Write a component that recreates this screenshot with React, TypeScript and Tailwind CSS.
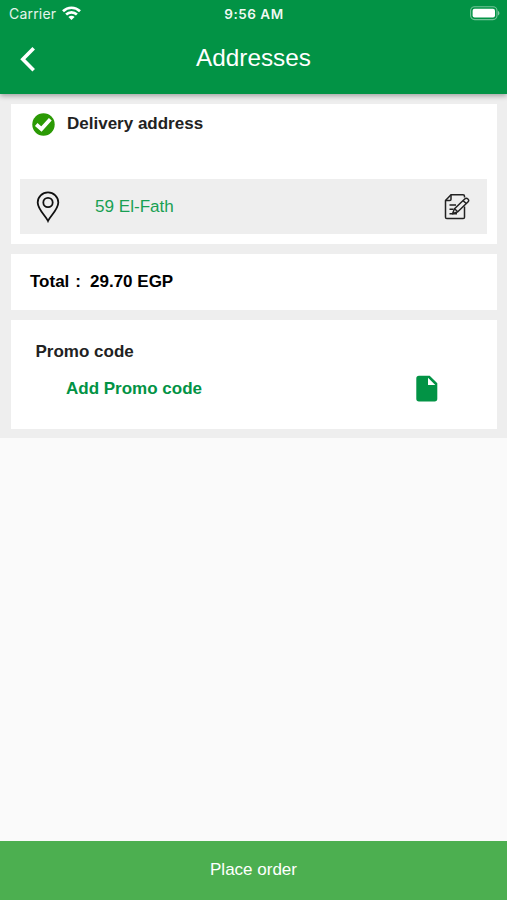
import React from 'react';

function StatusBar() {
  return (
    <div className="grid h-7 grid-cols-3 items-center pl-[9px] pr-[7px] font-['Inter',sans-serif] text-[14px] leading-7">
      <div className="flex items-center gap-[6px]">
        <span className="tracking-[0.2px] text-white/90">Carrier</span>
        <svg className="mb-[2px]" width="19" height="14" viewBox="0 0 19 14" fill="none" stroke="#fff" strokeWidth="2.7">
          <path d="M1 5.2C5.8 .6 13.2 .6 18 5.2" />
          <path d="M4.1 8.6C7.2 5.7 11.8 5.7 14.9 8.6" />
          <path d="M9.5 14 6.4 11C8.3 9.4 10.7 9.4 12.6 11Z" fill="#fff" stroke="none" />
        </svg>
      </div>
      <span className="pr-[1px] text-center text-[13.5px] font-semibold tracking-[0.5px] text-white/95">9:56 AM</span>
      <svg className="mb-[2px] justify-self-end" width="30" height="15" viewBox="0 0 30 15">
        <rect x=".6" y=".8" width="26.4" height="12.8" rx="4" fill="none" stroke="#fff" strokeOpacity=".45" strokeWidth="1.1" />
        <rect x="2.6" y="2.8" width="22.4" height="8.8" rx="2" fill="#fff" />
        <path d="M28 5v4.4c1.9-.7 1.9-3.7 0-4.4Z" fill="#fff" fillOpacity=".5" />
      </svg>
    </div>
  );
}

function Header() {
  return (
    <header className="relative h-[94px] shrink-0 bg-[#029345] text-white shadow-[0_2px_5px_rgba(0,0,0,0.32)]">
      <StatusBar />
      <div className="grid h-[62px] grid-cols-[60px_1fr_60px] items-center">
        <button aria-label="Back" className="pl-5">
          <svg width="16" height="26" viewBox="0 0 16 26" fill="none" stroke="#fff" strokeWidth="3.6">
            <path d="M13.7 2.300 2.800 13.300l10.900 11" />
          </svg>
        </button>
        <h1 className="pb-[2px] text-center text-[24.3px] leading-[60px]">Addresses</h1>
      </div>
    </header>
  );
}

function CheckIcon() {
  return (
    <svg width="23" height="23" viewBox="0 0 23 23">
      <circle cx="11.5" cy="11.5" r="11.2" fill="#2b9a05" />
      <path d="m4.200 11.500 5.200 4.500 8.900-9.800" fill="none" stroke="#fff" strokeWidth="3.8" />
    </svg>
  );
}

function PinIcon() {
  return (
    <svg width="24" height="32" viewBox="0 0 24 32" fill="none" stroke="#111" strokeWidth="1.8">
      <path d="M12 30C9.800 25.200 1.700 18.300 1.700 11.500a10.300 10.100 0 0 1 20.600 0C22.300 18.300 14.200 25.200 12 30Z" />
      <circle cx="12" cy="11.500" r="4.700" />
    </svg>
  );
}

function EditIcon() {
  return (
    <svg width="26" height="27" viewBox="0 0 26 27" fill="none" stroke="#222" strokeWidth="1.5" strokeLinejoin="round">
      <path d="M20.500 4.500V3.300Q20.500 1.800 19 1.800H7L1.500 7.500V24.200Q1.500 25.500 2.800 25.500H19.200Q20.500 25.500 20.500 24.200V13.500" />
      <path d="M7 1.800V6.200Q7 7.500 5.700 7.500H1.500" />
      <path d="M5.500 12H12M5.500 16.300H9.500M5.500 20.700H13" />
      <path d="M8.500 20.700 10.500 15.800 20.700 6Q22.300 4.600 23.900 6T23.900 9L13.800 18.700Z" fill="#eee" />
      <path d="m10.500 15.800 3.300 2.900M19 7.600l3.300 2.900" />
    </svg>
  );
}

function FileIcon() {
  return (
    <svg width="22" height="27" viewBox="0 0 22 27" fill="#029345">
      <path d="M3 .8H13.700L21.300 8.300V23.800A2.700 2.700 0 0 1 18.600 26.500H3A2.700 2.700 0 0 1 .3 23.800V3.500A2.700 2.700 0 0 1 3 .8ZM12 2.800V10H19.300Z" fillRule="evenodd" />
    </svg>
  );
}

export default function App() {
  return (
    <div className="flex h-[900px] w-full flex-col bg-[#fafafa] font-['Liberation_Sans',Arial,sans-serif] text-[17px] leading-5">
      <Header />

      <main className="flex flex-1 flex-col">
        <div className="flex flex-col gap-[10px] bg-[#eee] px-[10.500px] pt-[10px] pb-[9px]">
          <section className="flex h-[140px] flex-col justify-between bg-white px-[9.500px] pt-[9px] pb-[10px]">
            <div className="flex items-center gap-3 pl-[12px] font-bold text-[#222]">
              <CheckIcon />
              <h2 className="pb-[2px]">Delivery address</h2>
            </div>
            <div className="flex h-[55px] items-center bg-[#eee] pl-[16px] pr-[17px]">
              <PinIcon />
              <span className="ml-[35px] flex-1 text-[17.100px] text-[#18a053]">59 El-Fath</span>
              <button aria-label="Edit address">
                <EditIcon />
              </button>
            </div>
          </section>

          <section className="flex h-14 items-center gap-[6px] bg-white pl-[19.500px] font-bold text-black">
            <span>Total</span>
            <span>:</span>
            <span className="ml-[3px]">29.70 EGP</span>
          </section>

          <section className="h-[109px] bg-white pt-[22px] pl-[25px] font-bold">
            <h2 className="text-[#222]">Promo code</h2>
            <div className="mt-[13px] flex items-center justify-between pl-[30.500px] pr-[59px]">
              <span className="text-[#029345]">Add Promo code</span>
              <FileIcon />
            </div>
          </section>
        </div>
      </main>

      <button className="h-[59px] shrink-0 bg-[#4caf50] pb-[1px] text-white">Place order</button>
    </div>
  );
}
